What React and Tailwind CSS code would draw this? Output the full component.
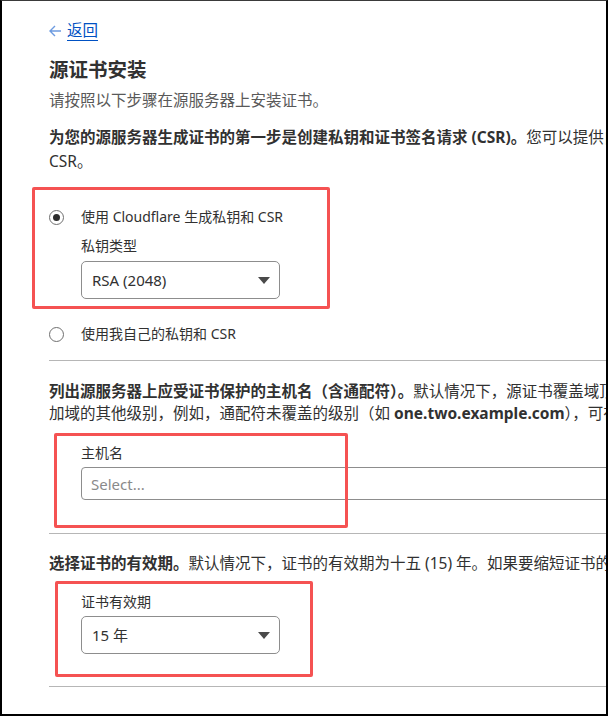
import React from 'react';

const font = { fontFamily: '"Noto Sans", "Noto Sans CJK SC", sans-serif' };

const Caret = () => (
    <svg width="12" height="7" viewBox="0 0 12 7" className="shrink-0">
        <path d="M0 0 L12 0 L6 7 Z" fill="#4a4a4a" />
    </svg>
);

const Radio = ({ checked }) => (
    <span className="flex h-[15px] w-[15px] shrink-0 items-center justify-center rounded-full border border-[#6f6f6f] bg-white">
        {checked && <span className="h-[7px] w-[7px] rounded-full bg-[#2c2c2c]" />}
    </span>
);

const SelectBox = ({ value }) => (
    <div className="flex h-[38px] w-[199px] items-center justify-between rounded-[5px] border border-[#8d8d8d] pl-[10px] pr-[9px] text-[15px] text-[#313131]">
        <span>{value}</span>
        <Caret />
    </div>
);

const Highlight = ({ className }) => (
    <div className={`pointer-events-none absolute rounded-[2px] border-[3px] border-[#f55252] ${className}`} />
);

export default function App() {
    return (
        <div
            className="relative h-[716px] w-[608px] overflow-hidden border-x-2 border-b-2 border-t border-x-black border-b-black border-t-[#3a3a3a] bg-white text-[#313131]"
            style={font}
        >
            <div className="w-[760px] pl-[47px] pt-[19px]">
                {/* Back link */}
                <a href="#" className="flex h-[20px] items-center gap-[5px] text-[15.5px] leading-[20px] text-[#0051c3]">
                    <svg width="13" height="12" viewBox="0 0 13 12" className="mt-[1px]">
                        <path d="M12 6 H1.5 M6 1 L1 6 L6 11" stroke="#6d9be0" strokeWidth="1.4" fill="none" />
                    </svg>
                    <span className="underline underline-offset-[4px]">返回</span>
                </a>

                {/* Header */}
                <h1 className="mt-[16px] text-[19.5px] font-bold leading-[28px]">源证书安装</h1>
                <p className="mt-[5px] text-[15.5px] leading-[22px] text-[#595959]">请按照以下步骤在源服务器上安装证书。</p>

                {/* Step 1 */}
                <p className="mt-[14px] whitespace-nowrap text-[15.5px] leading-[24px]">
                    <b className="font-bold">为您的源服务器生成证书的第一步是创建私钥和证书签名请求 (CSR)。</b>
                    您可以提供自己的私钥和
                    <br />
                    CSR。
                </p>

                <div className="mt-[34px] text-[14px] leading-[20px]">
                    <label className="flex items-center gap-[17px]">
                        <Radio checked />
                        <span>使用 Cloudflare 生成私钥和 CSR</span>
                    </label>
                    <div className="ml-[32px]">
                        <div className="mt-[9px]">私钥类型</div>
                        <div className="mt-[5px]">
                            <SelectBox value="RSA (2048)" />
                        </div>
                    </div>
                    <label className="mt-[25px] flex items-center gap-[17px]">
                        <Radio />
                        <span>使用我自己的私钥和 CSR</span>
                    </label>
                </div>

                <div className="mt-[16px] border-t border-[#b6b6b6]" />

                {/* Step 2 */}
                <p className="mt-[19px] whitespace-nowrap text-[15.5px] leading-[22px]">
                    <b className="font-bold">列出源服务器上应受证书保护的主机名（含通配符）。</b>
                    默认情况下，源证书覆盖域顶点和通配符。如果需要添
                    <br />
                    加域的其他级别，例如，通配符未覆盖的级别（如 <b className="font-bold">one.two.example.com</b>），可在此处添加。
                </p>

                <div className="ml-[32px] mt-[19px] text-[14px] leading-[20px]">
                    <div>主机名</div>
                    <div className="mt-[4px] flex h-[33px] w-[640px] items-center rounded-[4px] border border-[#8d8d8d] pl-[9px] text-[15px] text-[#8a8a8a]">
                        Select...
                    </div>
                </div>

                <div className="mt-[33px] border-t border-[#b6b6b6]" />

                {/* Step 3 */}
                <p className="mt-[18px] whitespace-nowrap text-[15.5px] leading-[22px]">
                    <b className="font-bold">选择证书的有效期。</b>
                    默认情况下，证书的有效期为十五 (15) 年。如果要缩短证书的有效期，请选择其他值。
                </p>

                <div className="ml-[32px] mt-[18px] text-[14px] leading-[20px]">
                    <div>证书有效期</div>
                    <div className="mt-[4px]">
                        <SelectBox value="15 年" />
                    </div>
                </div>

                <div className="mt-[32px] border-t border-[#b6b6b6]" />
            </div>

            {/* Annotation boxes */}
            <Highlight className="left-[30px] top-[186px] h-[122px] w-[298px]" />
            <Highlight className="left-[52px] top-[432px] h-[95px] w-[294px]" />
            <Highlight className="left-[53px] top-[580px] h-[96px] w-[258px]" />
        </div>
    );
}
